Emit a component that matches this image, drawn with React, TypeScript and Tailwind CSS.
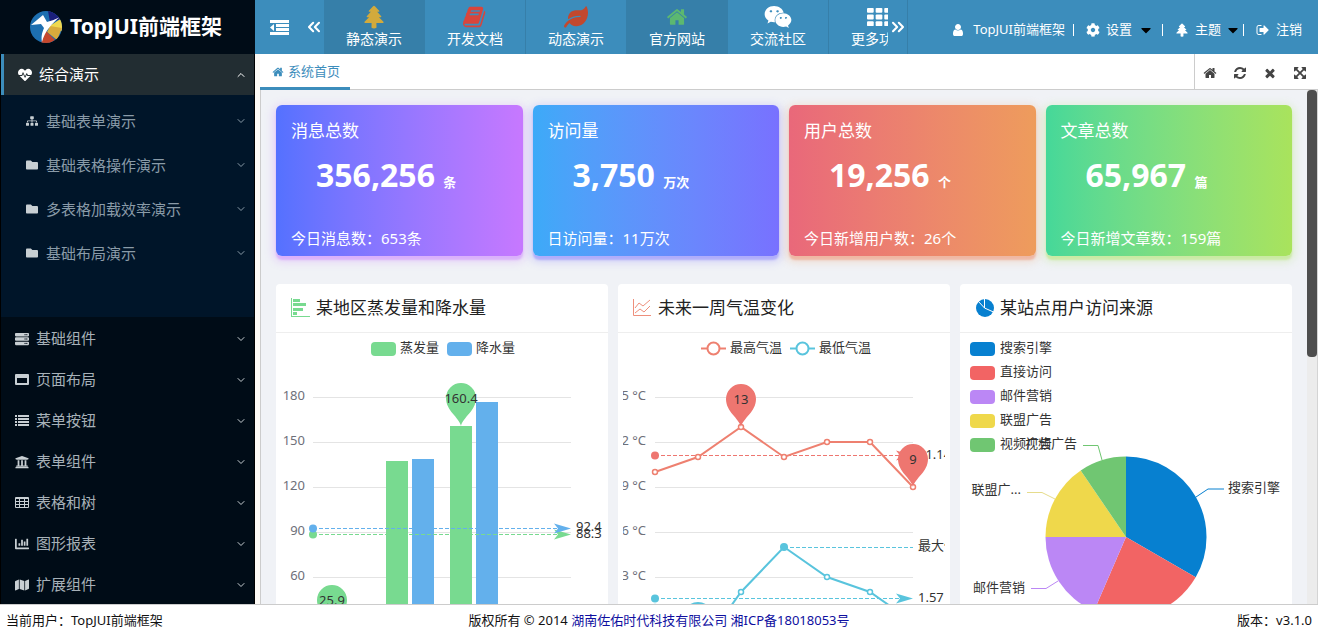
import type { ReactNode } from "react";
import { ChevronDown, ChevronsLeft, ChevronsRight, ChevronUp } from "lucide-react";
import {
  FaCaretDown,
  FaChartBar,
  FaCog,
  FaFolder,
  FaHeartbeat,
  FaLeaf,
  FaMap,
  FaServer,
  FaSitemap,
  FaUniversity,
  FaWeixin,
} from "react-icons/fa";

const ICONS = {
  home: "M1472 992v480q0 26-19 45t-45 19h-384v-384h-256v384h-384q-26 0-45-19t-19-45v-480q0-1 .5-3t.5-3l575-474 575 474q1 2 1 6zm223-69l-62 74q-8 9-21 11h-3q-13 0-21-7l-692-577-692 577q-12 8-24 7-13-2-21-11l-62-74q-8-10-7-23.5t11-21.5l719-599q32-26 76-26t76 26l244 204v-195q0-14 9-23t23-9h192q14 0 23 9t9 23v408l219 182q10 8 11 21.5t-7 23.5z",
  book: "M1639 478q40 57 18 129l-275 906q-19 64-76.5 107.5t-122.5 43.5h-923q-77 0-148.5-53.5t-99.5-131.5q-24-67-2-127 0-4 3-27t4-37q1-8-3-21.5t-3-19.5q2-11 8-21t16.5-23.5 16.5-23.5q23-38 45-91.5t30-91.5q3-10 .5-30t-.5-28q3-11 17-28t17-23q21-36 42-92t25-90q1-9-2.5-32t.5-28q4-13 22-30.5t22-22.5q19-26 42.5-84.5t27.5-96.5q1-8-3-25.5t-2-26.5q2-8 9-18t18-23 17-21q8-12 16.5-30.5t15-35 16-36 19.5-32 26.5-23.5 36-11.5 47.5 5.5l-1 3q38-9 51-9h761q74 0 114 56t18 130l-274 906q-36 119-71.5 153.5t-128.5 34.5h-869q-27 0-38 15-11 16-1 43 24 70 144 70h923q29 0 56-15.5t35-41.5l300-987q7-22 5-57 38 15 59 43zm-1064 2q-4 13 2 22.5t20 9.5h608q13 0 25.5-9.5t16.5-22.5l21-64q4-13-2-22.5t-20-9.5h-608q-13 0-25.5 9.5t-16.5 22.5zm-83 256q-4 13 2 22.5t20 9.5h608q13 0 25.5-9.5t16.5-22.5l21-64q4-13-2-22.5t-20-9.5h-608q-13 0-25.5 9.5t-16.5 22.5z",
  refresh:
    "M1639 1056q0 5-1 7-64 268-268 434.5t-478 166.5q-146 0-282.5-55t-243.5-157l-129 129q-19 19-45 19t-45-19-19-45v-448q0-26 19-45t45-19h448q26 0 45 19t19 45-19 45l-137 137q71 66 161 102t187 36q134 0 250-65t186-179q11-17 53-117 8-23 30-23h192q13 0 22.5 9.5t9.5 22.5zm25-800v448q0 26-19 45t-45 19h-448q-26 0-45-19t-19-45 19-45l138-138q-148-137-349-137-134 0-250 65t-186 179q-11 17-53 117-8 23-30 23h-199q-13 0-22.5-9.5t-9.5-22.5v-7q65-268 270-434.5t480-166.5q146 0 284 55.5t245 156.5l130-129q19-19 45-19t45 19 19 45z",
  close:
    "M1490 1322q0 40-28 68l-136 136q-28 28-68 28t-68-28l-294-294-294 294q-28 28-68 28t-68-28l-136-136q-28-28-28-68t28-68l294-294-294-294q-28-28-28-68t28-68l136-136q28-28 68-28t68 28l294 294 294-294q28-28 68-28t68 28l136 136q28 28 28 68t-28 68l-294 294 294 294q28 28 28 68z",
  expand:
    "M1411 541l-355 355 355 355 144-144q29-31 70-14 39 17 39 59v448q0 26-19 45t-45 19h-448q-42 0-59-40-17-39 14-69l144-144-355-355-355 355 144 144q31 30 14 69-17 40-59 40h-448q-26 0-45-19t-19-45v-448q0-42 40-59 39-17 69 14l144 144 355-355-355-355-144 144q-19 19-45 19-12 0-24-5-40-17-40-59v-448q0-26 19-45t45-19h448q42 0 59 40 17 39-14 69l-144 144 355 355 355-355-144-144q-31-30-14-69 17-40 59-40h448q26 0 45 19t19 45v448q0 42-39 59-13 5-25 5-26 0-45-19z",
  user: "M1536 1399q0 109-62.5 187t-150.5 78h-854q-88 0-150.5-78t-62.5-187q0-85 8.5-160.5t31.5-152 58.5-131 94-89 134.5-34.5q131 128 313 128t313-128q76 0 134.5 34.5t94 89 58.5 131 31.5 152 8.5 160.5zm-256-887q0 159-112.5 271.5t-271.5 112.5-271.5-112.5-112.5-271.5 112.5-271.5 271.5-112.5 271.5 112.5 112.5 271.5z",
  signOut:
    "M704 1440q0 4 1 20t.5 26.5-3 23.5-10 19.5-20.5 6.5h-320q-119 0-203.5-84.5t-84.5-203.5v-704q0-119 84.5-203.5t203.5-84.5h320q13 0 22.5 9.5t9.5 22.5q0 4 1 20t.5 26.5-3 23.5-10 19.5-20.5 6.5h-320q-66 0-113 47t-47 113v704q0 66 47 113t113 47h312l11.5 1 11.5 3 8 5.5 7 9 2 13.5zm928-544q0 26-19 45l-544 544q-19 19-45 19t-45-19-19-45v-288h-448q-26 0-45-19t-19-45v-384q0-26 19-45t45-19h448v-288q0-26 19-45t45-19 45 19l544 544q19 19 19 45z",
  tree: "M896 60q40 0 66 32l318 336q20 24 8 50t-44 26h-110l302 330q20 24 8 50t-44 26h-134l336 344q22 26 10 54t-46 28h-490l8 330q0 40-40 60t-148 20-148-20-40-60l8-330H226q-34 0-46-28t10-54l336-344H392q-32 0-44-26t8-50l302-330H548q-32 0-44-26t8-50L830 92q26-32 66-32z",
};

function Icon({ name, className }: { name: keyof typeof ICONS; className?: string }) {
  return (
    <svg viewBox="0 0 1792 1792" fill="currentColor" className={className} aria-hidden="true">
      <path d={ICONS[name]} />
    </svg>
  );
}

/* small solid glyphs for the side menu */
function Glyph({ d }: { d: string }) {
  return (
    <svg viewBox="0 0 14 14" className="w-3.5 h-3.5" aria-hidden="true">
      <path fill="currentColor" fillRule="evenodd" d={d} />
    </svg>
  );
}

const windowGlyph = "M1 1h12a1 1 0 0 1 1 1v9a1 1 0 0 1-1 1H1a1 1 0 0 1-1-1V2a1 1 0 0 1 1-1zm1 4v5h10V5z";
const listGlyph = "M0 1h2v2H0zM3 1h11v2H3zM0 4h2v2H0zM3 4h11v2H3zM0 7h2v2H0zM3 7h11v2H3zM0 10h2v2H0zM3 10h11v2H3z";
const tableGlyph =
  "M1 1h12a1 1 0 0 1 1 1v9a1 1 0 0 1-1 1H1a1 1 0 0 1-1-1V2a1 1 0 0 1 1-1zM1 3v2h3V3zM5 3v2h4V3zM10 3v2h3V3zM1 6v2h3V6zM5 6v2h4V6zM10 6v2h3V6zM1 9v2h3V9zM5 9v2h4V9zM10 9v2h3V9z";

function Logo() {
  return (
    <svg viewBox="0 0 32 32" className="w-8 h-8 shrink-0" aria-hidden="true">
      <clipPath id="logo-disc">
        <circle cx="16" cy="16" r="16" />
      </clipPath>
      <g clipPath="url(#logo-disc)">
        <path fill="#1d6fb0" d="M0 0h32v32H0z" />
        <path fill="#1b1f7a" d="M18 0h14v8l-12 3z" />
        <path fill="#efd84f" d="M32 7v13l-14-4z" />
        <path fill="#d9ab3c" d="M20 15l12 2-5 12-10-8z" />
        <path fill="#c5472c" d="M16 20l9 9-5 3h-9z" />
        <path fill="#fff" d="M1 14L13 4l4 7c4-1 9-3 13-5-8 6-15 14-18 25-1-6 0-9 2-14l-3-4z" />
      </g>
    </svg>
  );
}

const topMenu = [
  { label: "静态演示", active: true, icon: <Icon name="tree" className="w-6 h-[26px] text-[#d2aa3c]" /> },
  { label: "开发文档", active: false, icon: <Icon name="book" className="w-6 h-6 text-[#d8453c]" /> },
  { label: "动态演示", active: false, icon: <FaLeaf className="w-6 h-6 text-[#c2482e]" /> },
  { label: "官方网站", active: true, icon: <Icon name="home" className="w-[22px] h-[22px] text-[#5cb870]" /> },
  { label: "交流社区", active: false, icon: <FaWeixin className="w-7 h-7 text-white" /> },
  {
    label: "更多功能",
    active: false,
    icon: (
      <svg viewBox="0 0 25 19" className="w-6 h-5" fill="#fff" aria-hidden="true">
        {[0, 7, 14].map((y) =>
          [0, 9, 18].map((x) => <rect key={`${x}-${y}`} x={x} y={y} width="7" height="5" rx="1" />)
        )}
      </svg>
    ),
  },
];

const subMenu = [
  { label: "基础表单演示", icon: <FaSitemap /> },
  { label: "基础表格操作演示", icon: <FaFolder /> },
  { label: "多表格加载效率演示", icon: <FaFolder /> },
  { label: "基础布局演示", icon: <FaFolder /> },
];

const sideMenu = [
  { label: "基础组件", icon: <FaServer /> },
  { label: "页面布局", icon: <Glyph d={windowGlyph} /> },
  { label: "菜单按钮", icon: <Glyph d={listGlyph} /> },
  { label: "表单组件", icon: <FaUniversity /> },
  { label: "表格和树", icon: <Glyph d={tableGlyph} /> },
  { label: "图形报表", icon: <FaChartBar /> },
  { label: "扩展组件", icon: <FaMap /> },
];

const stats = [
  {
    title: "消息总数",
    value: "356,256",
    unit: "条",
    note: "今日消息数：653条",
    style: "from-[#5471ff] to-[#c778ff] shadow-[0_4px_2px_rgba(199,120,255,0.4),0_3px_8px_3px_rgba(199,120,255,0.25)]",
  },
  {
    title: "访问量",
    value: "3,750",
    unit: "万次",
    note: "日访问量：11万次",
    style: "from-[#3caaf8] to-[#7871ff] shadow-[0_4px_2px_rgba(120,113,255,0.4),0_3px_8px_3px_rgba(120,113,255,0.25)]",
  },
  {
    title: "用户总数",
    value: "19,256",
    unit: "个",
    note: "今日新增用户数：26个",
    style: "from-[#e9687a] to-[#ee9c5c] shadow-[0_4px_2px_rgba(238,126,92,0.4),0_3px_8px_3px_rgba(238,156,92,0.25)]",
  },
  {
    title: "文章总数",
    value: "65,967",
    unit: "篇",
    note: "今日新增文章数：159篇",
    style: "from-[#45d899] to-[#a9e35c] shadow-[0_4px_2px_rgba(169,227,92,0.4),0_3px_8px_3px_rgba(169,227,92,0.25)]",
  },
];

function Header() {
  return (
    <header className="flex h-[54px] shrink-0 bg-[#3c8dbc] text-white">
      <div className="flex w-[255px] shrink-0 items-center gap-2 bg-[#000c17] pl-[30px]">
        <Logo />
        <h1 className="text-[21px] font-bold whitespace-nowrap">TopJUI前端框架</h1>
      </div>
      <button aria-label="折叠菜单" className="flex w-12 shrink-0 items-center justify-center">
        <svg viewBox="0 0 19 15" className="w-[19px] h-[15px]" fill="#fff" aria-hidden="true">
          <path d="M0 0h19v3H0zM6 4h13v3H6zM6 8h13v3H6zM0 12h19v3H0zM4 4v7L0 7.500z" />
        </svg>
      </button>
      <button aria-label="向左" className="flex w-[21px] shrink-0 items-center justify-center">
        <ChevronsLeft className="w-5 h-5 shrink-0" strokeWidth={2.5} />
      </button>
      <nav className="flex w-[564px] min-w-0 overflow-hidden">
        {topMenu.map((item) => (
          <a
            key={item.label}
            href="#"
            className={`flex w-[101px] shrink-0 flex-col items-center border-r border-[#367fa9] pt-1 ${
              item.active ? "bg-[#367fa9]" : ""
            }`}
          >
            <span className="flex h-[26px] items-center justify-center">{item.icon}</span>
            <span className="text-sm leading-[18px]">{item.label}</span>
          </a>
        ))}
      </nav>
      <button aria-label="向右" className="flex w-5 shrink-0 items-center justify-center border-r border-[#367fa9]">
        <ChevronsRight className="w-5 h-5 shrink-0" strokeWidth={2.5} />
      </button>
      <div className="ml-auto flex items-center pt-1.5 pr-4 text-[13px] whitespace-nowrap">
        <a href="#" className="flex items-center gap-2">
          <Icon name="user" className="w-3.5 h-3.5" />
          TopJUI前端框架
        </a>
        <span className="ml-2 h-3 w-px bg-white" />
        <button className="ml-3 flex items-center gap-1.5">
          <FaCog className="w-3.5 h-3.5" />
          设置
          <FaCaretDown className="ml-0.5 w-3 h-4 text-black" />
        </button>
        <span className="ml-2.5 h-3 w-px bg-white" />
        <button className="ml-3 flex items-center gap-1.5">
          <Icon name="tree" className="w-3.5 h-3.5" />
          主题
          <FaCaretDown className="w-3 h-4 text-black" />
        </button>
        <span className="ml-1 h-3 w-px bg-white" />
        <a href="#" className="ml-3 flex items-center gap-1.5">
          <Icon name="signOut" className="w-3.5 h-3.5" />
          注销
        </a>
      </div>
    </header>
  );
}

function Sidebar() {
  return (
    <aside className="flex w-[255px] shrink-0 flex-col overflow-hidden border-x border-black bg-[#000c17] text-[15px] text-[#a7b1b8]">
      <button className="flex h-[41px] shrink-0 items-center border-l-[3px] border-[#3c8dbc] bg-[#222d32] pr-[7px] pl-3.5 text-white">
        <FaHeartbeat className="w-3.5 h-3.5" />
        <span className="ml-[7px]">综合演示</span>
        <ChevronUp className="ml-auto w-3 h-3" />
      </button>
      <ul className="h-[222px] shrink-0 bg-[#001529] pt-1 text-[#8a9ba8]">
        {subMenu.map((item) => (
          <li key={item.label}>
            <button className="flex h-11 w-full items-center pr-[7px] pl-[25px]">
              <span className="text-xs text-[#c8cfd3]">{item.icon}</span>
              <span className="ml-2">{item.label}</span>
              <ChevronDown className="ml-auto w-3 h-3" />
            </button>
          </li>
        ))}
      </ul>
      <ul className="pt-px">
        {sideMenu.map((item) => (
          <li key={item.label}>
            <button className="flex h-[41px] w-full items-center pr-[7px] pl-3.5">
              <span className="text-sm text-[#c8cfd3]">{item.icon}</span>
              <span className="ml-[7px]">{item.label}</span>
              <ChevronDown className="ml-auto w-3 h-3 text-[#c8cfd3]" />
            </button>
          </li>
        ))}
      </ul>
    </aside>
  );
}

function TabBar() {
  return (
    <div className="flex h-9 shrink-0 border-b border-[#ccc] bg-white">
      <a href="#" className="flex h-9 w-[90px] items-center gap-1 border-b-[3px] border-[#3c8dbc] pt-0.5 pl-3 text-[13px] text-[#3c8dbc]">
        <Icon name="home" className="w-3 h-3" />
        系统首页
      </a>
      <div className="ml-auto flex items-center gap-4 border-l border-[#ccc] pt-0.5 pr-[11px] pl-2 text-[#444]">
        <button aria-label="首页"><Icon name="home" className="w-3.5 h-3.5" /></button>
        <button aria-label="刷新"><Icon name="refresh" className="w-3.5 h-3.5" /></button>
        <button aria-label="关闭"><Icon name="close" className="w-3.5 h-3.5" /></button>
        <button aria-label="全屏"><Icon name="expand" className="w-3.5 h-3.5" /></button>
      </div>
    </div>
  );
}

function Panel({ title, icon, children }: { title: string; icon: ReactNode; children: ReactNode }) {
  return (
    <section className="rounded-sm bg-white">
      <h2 className="flex h-[49px] items-center gap-1.5 border-b border-[#eee] pl-3.5 text-[17px] text-[#222]">
        {icon}
        {title}
      </h2>
      <div className="px-[5px]">{children}</div>
    </section>
  );
}

function Pin({ x, y, fill, label }: { x: number; y: number; fill: string; label?: string }) {
  return (
    <g transform={`translate(${x} ${y})`}>
      <path fill={fill} d="M0 28C-2 19-15 13-15 0A15 15 0 1 1 15 0C15 13 2 19 0 28z" />
      {label && (
        <text y="5" textAnchor="middle">
          {label}
        </text>
      )}
    </g>
  );
}

function AverageLine({ y, color, end = 295 }: { y: number; color: string; end?: number }) {
  return (
    <g fill={color}>
      <path d={`M37 ${y}H${end}`} stroke={color} strokeDasharray="4 2" />
      <circle cx="37" cy={y} r="4" />
      <path d={`M${end} ${y}l-17-5 4 5-4 5z`} />
    </g>
  );
}

const gridY = [64, 109, 154, 199, 244];

function GridLines({ labels, labelX }: { labels: string[]; labelX: number }) {
  return (
    <>
      {gridY.map((y, i) => (
        <g key={y}>
          <path d={`M37 ${y}.5H295`} stroke="#e4e4e4" />
          <text x={labelX} y={y + 3} textAnchor="end" fill="#6e7079">
            {labels[i]}
          </text>
        </g>
      ))}
    </>
  );
}

function Chart({ label, children }: { label: string; children: ReactNode }) {
  return (
    <svg viewBox="5 0 322 300" className="block w-full overflow-hidden text-[13px]" fill="#333" role="img" aria-label={label}>
      {children}
    </svg>
  );
}

const GREEN = "#78da90";
const BLUE = "#63b0ec";

function BarChart() {
  return (
    <Chart label="某地区蒸发量和降水量">
      <rect x="95" y="9" width="25" height="14" rx="4" fill={GREEN} />
      <text x="124" y="19">蒸发量</text>
      <rect x="171" y="9" width="25" height="14" rx="4" fill={BLUE} />
      <text x="200" y="19">降水量</text>
      <GridLines labels={["180", "150", "120", "90", "60"]} labelX={29} />
      <rect x="110" y="128" width="22" height="172" fill={GREEN} />
      <rect x="136" y="126" width="22" height="174" fill={BLUE} />
      <rect x="174" y="93" width="22" height="207" fill={GREEN} />
      <rect x="200" y="69" width="22" height="231" fill={BLUE} />
      <AverageLine y={201.5} color={GREEN} />
      <AverageLine y={195.5} color={BLUE} />
      <text x="300" y="205">88.3</text>
      <text x="300" y="198">92.4</text>
      <Pin x={185} y={65} fill={GREEN} label="160.4" />
      <Pin x={56} y={267} fill={GREEN} label="25.9" />
    </Chart>
  );
}

const CORAL = "#ee8070";
const PIN_RED = "#ee7670";
const CYAN = "#59c4dd";

const highs = [[37, 139], [80, 124], [123, 94], [166, 124], [209, 109], [252, 109], [295, 154]];
const lows = [[37, 274], [80, 319], [123, 259], [166, 214], [209, 244], [252, 259], [295, 289]];

function Series({ points, color }: { points: number[][]; color: string }) {
  return (
    <g stroke={color} strokeWidth="2">
      <polyline points={points.join(" ")} fill="none" />
      {points.map(([x, y]) => (
        <circle key={x} cx={x} cy={y} r="2.5" fill="#fff" strokeWidth="1.5" />
      ))}
    </g>
  );
}

function LineChart() {
  return (
    <Chart label="未来一周气温变化">
      <g fill="#fff" strokeWidth="2">
        <path d="M83 15.5h25" stroke={CORAL} />
        <circle cx="95.5" cy="15.5" r="6" stroke={CORAL} />
        <path d="M172 15.5h25" stroke={CYAN} />
        <circle cx="184.5" cy="15.5" r="6" stroke={CYAN} />
      </g>
      <text x="112" y="19">最高气温</text>
      <text x="201" y="19">最低气温</text>
      <GridLines labels={["15 °C", "12 °C", "9 °C", "6 °C", "3 °C"]} labelX={28} />
      <AverageLine y={122.5} color={PIN_RED} />
      <text x="300" y="126">11.14</text>
      <Series points={highs} color={CORAL} />
      <path d="M166 214.5H295" stroke={CYAN} strokeDasharray="4 2" />
      <text x="300" y="217">最大值</text>
      <AverageLine y={265.5} color={CYAN} />
      <text x="300" y="269">1.57</text>
      <Series points={lows} color={CYAN} />
      <circle cx="166" cy="214" r="4" fill={CYAN} />
      <Pin x={123} y={66} fill={PIN_RED} label="13" />
      <Pin x={295} y={126} fill={PIN_RED} label="9" />
      <Pin x={80} y={284} fill={CYAN} />
    </Chart>
  );
}

const sources = [
  { name: "搜索引擎", color: "#0780d0", slice: "M166 204V123.5A80.5 80.5 0 0 1 235.7 244.3z" },
  { name: "直接访问", color: "#f26464", slice: "M166 204L235.7 244.3A80.5 80.5 0 0 1 134 277.9z" },
  { name: "邮件营销", color: "#bb87f5", slice: "M166 204L134 277.9A80.5 80.5 0 0 1 85.5 204z" },
  { name: "联盟广告", color: "#efd84b", slice: "M166 204H85.5A80.5 80.5 0 0 1 120.7 137.4z" },
  { name: "视频广告", color: "#70c672", slice: "M166 204L120.7 137.4A80.5 80.5 0 0 1 166 123.5z" },
];

function PieChart() {
  return (
    <Chart label="某站点用户访问来源">
      {sources.map((s, i) => (
        <g key={s.name}>
          <rect x="10" y={9 + i * 24} width="25" height="14" rx="4" fill={s.color} />
          <text x="40" y={19 + i * 24}>{s.name}</text>
          <path d={s.slice} fill={s.color} />
        </g>
      ))}
      <g fill="none">
        <path d="M236 164L248 156H264" stroke="#0780d0" />
        <path d="M142 127L138 112.5H123" stroke="#70c672" />
        <path d="M95 166L82 159.5H67" stroke="#e6dc8c" />
        <path d="M98 248L86 255.5H71" stroke="#bb87f5" />
      </g>
      <text x="268" y="159">搜索引擎</text>
      <text x="117" y="115" textAnchor="end">视频广告</text>
      <text x="61" y="161" textAnchor="end">联盟广...</text>
      <text x="65" y="259" textAnchor="end">邮件营销</text>
    </Chart>
  );
}

const barIcon = (
  <svg viewBox="0 0 20 20" className="w-5 h-5" fill="#78da90" aria-hidden="true">
    <path d="M1 0h1v18h18v1H1zM3 1h7v3H3zM3 5h13v3H3zM3 10h10v3H3zM3 14h4v3H3z" />
  </svg>
);

const lineIcon = (
  <svg viewBox="0 0 20 20" className="w-5 h-5" fill="none" stroke="#ee8f7c" aria-hidden="true">
    <path d="M1.500 1v16.500H19M3 10l4-5 4 3 7-6M3 15l5-4 4 3 6-6" />
  </svg>
);

const pieIcon = (
  <svg viewBox="0 0 20 20" className="w-5 h-5" aria-hidden="true">
    <circle cx="11" cy="10" r="9" fill="#0780d0" />
    <path d="M10.500 1v9l9 4M10.500 10L4 3" fill="none" stroke="#fff" />
  </svg>
);

function Dashboard() {
  return (
    <main className="min-w-0 flex-1 px-[15px] pt-[15px]">
      <div className="grid grid-cols-4 gap-2.5">
        {stats.map((s) => (
          <section key={s.title} className={`flex h-[151px] flex-col rounded-md bg-linear-to-r px-[15px] text-white ${s.style}`}>
            <h2 className="mt-3.5 text-[17px] leading-6">{s.title}</h2>
            <p className="mt-3 pl-[25px] text-[32px] leading-10 font-bold">
              {s.value} <span className="text-[13px]">{s.unit}</span>
            </p>
            <p className="mt-auto mb-2 text-[15px] leading-5">{s.note}</p>
          </section>
        ))}
      </div>
      <div className="mt-7 grid grid-cols-3 gap-2.5">
        <Panel title="某地区蒸发量和降水量" icon={barIcon}>
          <BarChart />
        </Panel>
        <Panel title="未来一周气温变化" icon={lineIcon}>
          <LineChart />
        </Panel>
        <Panel title="某站点用户访问来源" icon={pieIcon}>
          <PieChart />
        </Panel>
      </div>
    </main>
  );
}

export default function App() {
  return (
    <div className="flex h-screen flex-col overflow-hidden bg-white font-['Noto_Sans','Noto_Sans_CJK_SC',sans-serif]">
      <Header />
      <div className="flex min-h-0 flex-1">
        <Sidebar />
        <div className="flex min-w-0 flex-1 flex-col bg-[#fdfaf6] pl-[5px]">
          <TabBar />
          <div className="flex min-h-0 flex-1 overflow-hidden border-l border-[#ccc] bg-[#f0f2f6]">
            <Dashboard />
            {/* scrollbar */}
            <div className="w-[11px] shrink-0 border-r border-[#d4d4d4] bg-[#ececec]">
              <div className="h-[267px] rounded-sm bg-[#4e4e4e]" />
            </div>
          </div>
        </div>
      </div>
      <footer className="grid h-[30px] shrink-0 grid-cols-[1fr_auto_1fr] items-center border-t border-[#ccc] bg-white px-1.5 pt-0.5 text-[13px] text-[#111]">
        <span>当前用户：TopJUI前端框架</span>
        <span>
          版权所有 © 2014{" "}
          <a href="#" className="text-[#0f0fa0]">湖南佐佑时代科技有限公司</a>{" "}
          <a href="#" className="text-[#0f0fa0]">湘ICP备18018053号</a>
        </span>
        <span className="text-right">版本：v3.1.0</span>
      </footer>
    </div>
  );
}
